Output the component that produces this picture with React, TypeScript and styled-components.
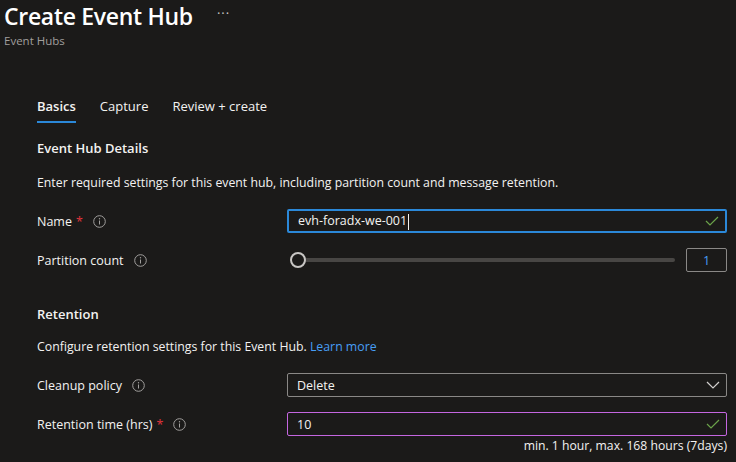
import React from "react";
import styled, { createGlobalStyle } from "styled-components";

const Global = createGlobalStyle`
  html, body { margin: 0; padding: 0; background: #1b1a19; }
  body { font-family: "Open Sans", "Noto Sans", sans-serif; color: #f3f2f1; }
  * { box-sizing: border-box; }
`;

const Page = styled.div`
  width: 736px;
  height: 462px;
  overflow: hidden;
  background: #1b1a19;
  display: flex;
  flex-direction: column;
`;

const Header = styled.div`
  padding: 0 0 0 4px;
  display: flex;
  flex-direction: column;
`;

const TitleRow = styled.div`
  display: flex;
  align-items: center;
  gap: 24px;
  height: 32px;
`;

const Title = styled.h1`
  margin: 0;
  font-size: 23px;
  font-weight: 600;
  color: #ffffff;
  letter-spacing: -0.3px;
`;

const More = styled.span`
  font-size: 13px;
  color: #c8c6c4;
  letter-spacing: 1px;
  margin-top: -6px;
`;

const Sub = styled.div`
  font-size: 11.5px;
  color: #a19f9d;
  margin-top: 1px;
`;

const Body = styled.div`
  padding: 44px 9px 0 37px;
  display: flex;
  flex-direction: column;
`;

const Tabs = styled.div`
  display: flex;
  gap: 24px;
  height: 36px;
`;

const Tab = styled.div<{ $active?: boolean }>`
  font-size: 13px;
  font-weight: ${(p) => (p.$active ? 600 : 400)};
  color: #f3f2f1;
  position: relative;
  padding-top: 5px;
  &::after {
    content: "";
    display: ${(p) => (p.$active ? "block" : "none")};
    position: absolute;
    left: 0;
    right: 0;
    top: 29px;
    height: 2px;
    background: #2b88d8;
  }
`;

const SectionTitle = styled.div`
  font-size: 13px;
  font-weight: 600;
  color: #f3f2f1;
  height: 20px;
  line-height: 20px;
`;

const Desc = styled.div`
  font-size: 12.3px;
  color: #f3f2f1;
  line-height: 20px;
  height: 20px;
`;

const Link = styled.span`
  color: #479ef5;
`;

const Row = styled.div`
  display: grid;
  grid-template-columns: 250px 1fr;
  align-items: center;
  height: 24px;
`;

const Label = styled.div`
  display: flex;
  align-items: center;
  font-size: 12.5px;
  color: #f3f2f1;
`;

const Req = styled.span`
  color: #e1343c;
  margin-left: 4px;
`;

const Info = styled.span`
  display: inline-flex;
  margin-left: 10px;
`;

const InfoIcon = () => (
  <Info>
    <svg width="13" height="13" viewBox="0 0 13 13">
      <circle cx="6.5" cy="6.5" r="5.8" fill="none" stroke="#a19f9d" strokeWidth="1" />
      <line x1="6.5" y1="5.5" x2="6.5" y2="9.5" stroke="#a19f9d" strokeWidth="1" />
      <circle cx="6.5" cy="3.8" r="0.7" fill="#a19f9d" />
    </svg>
  </Info>
);

const Field = styled.div<{ $border: string }>`
  height: 24px;
  border: ${(p) => p.$border};
  border-radius: 2px;
  display: flex;
  align-items: center;
  justify-content: space-between;
  padding: 0 6px 0 9px;
  font-size: 12.5px;
  color: #f3f2f1;
  background: #1b1a19;
`;

const Caret = styled.span`
  display: inline-block;
  width: 1px;
  height: 16px;
  background: #f3f2f1;
  margin-left: 1px;
  vertical-align: middle;
`;

const Check = () => (
  <svg width="14" height="10" viewBox="0 0 14 10">
    <path d="M1 5 L5 9 L13 1" fill="none" stroke="#6ba34a" strokeWidth="1.2" />
  </svg>
);

const Chevron = () => (
  <svg width="14" height="8" viewBox="0 0 14 8">
    <path d="M1 1 L7 7 L13 1" fill="none" stroke="#d2d0ce" strokeWidth="1.2" />
  </svg>
);

const SliderWrap = styled.div`
  display: flex;
  align-items: center;
  gap: 11px;
`;

const Track = styled.div`
  flex: 1;
  height: 4px;
  background: #484644;
  border-radius: 2px;
  position: relative;
  margin-left: 10px;
`;

const Thumb = styled.div`
  position: absolute;
  left: -7px;
  top: -6px;
  width: 16px;
  height: 16px;
  border-radius: 50%;
  border: 2px solid #c8c6c4;
  background: #1b1a19;
`;

const NumBox = styled.div`
  width: 41px;
  height: 24px;
  border: 1px solid #8a8886;
  border-radius: 2px;
  display: flex;
  align-items: center;
  justify-content: center;
  font-size: 12.5px;
  color: #479ef5;
`;

const Hint = styled.div`
  text-align: right;
  font-size: 12.2px;
  color: #f3f2f1;
  line-height: 18px;
  margin-top: 1px;
`;

const Spacer = styled.div<{ $h: number }>`
  height: ${(p) => p.$h}px;
  flex-shrink: 0;
`;

export default function App() {
  return (
    <Page>
      <Global />
      <Header>
        <TitleRow>
          <Title>Create Event Hub</Title>
          <More>···</More>
        </TitleRow>
        <Sub>Event Hubs</Sub>
      </Header>
      <Body>
        <Tabs>
          <Tab $active>Basics</Tab>
          <Tab>Capture</Tab>
          <Tab>Review + create</Tab>
        </Tabs>
        <Spacer $h={10} />
        <SectionTitle>Event Hub Details</SectionTitle>
        <Spacer $h={15} />
        <Desc>Enter required settings for this event hub, including partition count and message retention.</Desc>
        <Spacer $h={16} />
        <Row>
          <Label>
            Name<Req>*</Req>
            <InfoIcon />
          </Label>
          <Field $border="2px solid #2b88d8">
            <span>
              evh-foradx-we-001<Caret />
            </span>
            <Check />
          </Field>
        </Row>
        <Spacer $h={15} />
        <Row>
          <Label>
            Partition count
            <InfoIcon />
          </Label>
          <SliderWrap>
            <Track>
              <Thumb />
            </Track>
            <NumBox>1</NumBox>
          </SliderWrap>
        </Row>
        <Spacer $h={32} />
        <SectionTitle>Retention</SectionTitle>
        <Spacer $h={13} />
        <Desc>
          Configure retention settings for this Event Hub. <Link>Learn more</Link>
        </Desc>
        <Spacer $h={16} />
        <Row>
          <Label>
            Cleanup policy
            <InfoIcon />
          </Label>
          <Field $border="1px solid #8a8886">
            <span>Delete</span>
            <Chevron />
          </Field>
        </Row>
        <Spacer $h={15} />
        <Row>
          <Label>
            Retention time (hrs)<Req>*</Req>
            <InfoIcon />
          </Label>
          <Field $border="1px solid #c466e0">
            <span>10</span>
            <Check />
          </Field>
        </Row>
        <Hint>min. 1 hour, max. 168 hours (7days)</Hint>
      </Body>
    </Page>
  );
}
